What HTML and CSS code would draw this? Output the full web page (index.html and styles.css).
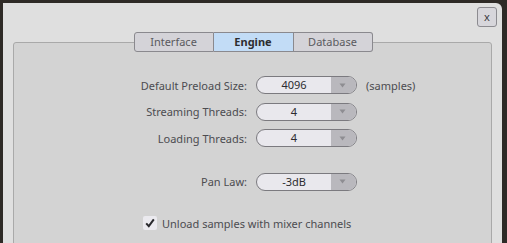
FILE: index.html
```html
<!DOCTYPE html>
<html>
<head>
<meta charset="utf-8">
<link rel="stylesheet" href="styles.css">
</head>
<body>
<div class="window">
  <div class="header">
    <button class="close">x</button>
  </div>
  <div class="tabs">
    <div class="tab">Interface</div>
    <div class="tab active">Engine</div>
    <div class="tab">Database</div>
  </div>
  <div class="frame">
    <div class="form">
      <div class="label">Default Preload Size:</div>
      <div class="combo"><span class="value">4096</span><span class="arrow"><svg width="7" height="5" viewBox="0 0 7 5"><path d="M0.5 0.5h6L3.5 4.5z" fill="#8e8d92"/></svg></span></div>
      <div class="unit">(samples)</div>

      <div class="label">Streaming Threads:</div>
      <div class="combo"><span class="value">4</span><span class="arrow"><svg width="7" height="5" viewBox="0 0 7 5"><path d="M0.5 0.5h6L3.5 4.5z" fill="#8e8d92"/></svg></span></div>
      <div></div>

      <div class="label">Loading Threads:</div>
      <div class="combo"><span class="value">4</span><span class="arrow"><svg width="7" height="5" viewBox="0 0 7 5"><path d="M0.5 0.5h6L3.5 4.5z" fill="#8e8d92"/></svg></span></div>
      <div></div>

      <div class="label spaced">Pan Law:</div>
      <div class="combo spaced"><span class="value">-3dB</span><span class="arrow"><svg width="7" height="5" viewBox="0 0 7 5"><path d="M0.5 0.5h6L3.5 4.5z" fill="#8e8d92"/></svg></span></div>
      <div class="spaced"></div>
    </div>
    <label class="check">
      <span class="box"><svg width="12" height="12" viewBox="0 0 12 12"><path d="M2.2 6.4 L4.8 9.2 L9.8 2.4" fill="none" stroke="#2a2a2e" stroke-width="2"/></svg></span>
      <span class="check-text">Unload samples with mixer channels</span>
    </label>
  </div>
</div>
</body>
</html>
```
FILE: styles.css
```css
html, body {
  margin: 0;
  padding: 0;
  background: #2e2a26;
  width: 507px;
  height: 243px;
  overflow: hidden;
  font-family: "Noto Sans", "Open Sans", sans-serif;
  font-size: 11px;
}

.window {
  margin: 3px 5px 0 3px;
  height: 240px;
  overflow: hidden;
  background: #dfdfdf;
  border-top-right-radius: 6px;
  box-sizing: border-box;
  padding: 0 10px;
}

.header {
  display: flex;
  justify-content: flex-end;
  padding-top: 4px;
  margin-right: -5px;
  height: 25px;
  box-sizing: border-box;
}

.close {
  width: 20px;
  height: 20px;
  padding: 0;
  margin: 0;
  border: 1px solid #8c8b90;
  border-radius: 3px;
  background: #d7d6db;
  color: #3a3a3e;
  font-family: "Noto Sans", sans-serif;
  font-size: 11px;
  line-height: 16px;
  font-weight: normal;
}

.tabs {
  display: flex;
  justify-content: center;
  margin-top: 4px;
  margin-left: 1px;
  position: relative;
  z-index: 1;
  height: 20px;
}

.tab {
  width: 80px;
  height: 20px;
  box-sizing: border-box;
  border: 1px solid #8a898e;
  border-left: none;
  background: #d4d3d8;
  color: #5a5a5e;
  text-align: center;
  line-height: 18px;
}

.tab:first-child {
  border-left: 1px solid #8a898e;
  border-radius: 3px 0 0 3px;
}

.tab:last-child {
  border-radius: 0 3px 3px 0;
  width: 79px;
}

.tab.active {
  background: #c2dcf6;
  color: #2d2d30;
  font-weight: bold;
}

.frame {
  margin-top: -10px;
  height: 220px;
  background: #d3d3d3;
  border: 1px solid #a9a9a9;
  border-radius: 3px;
  box-sizing: border-box;
}

.form {
  display: grid;
  grid-template-columns: 233px 101px auto;
  column-gap: 9px;
  row-gap: 8.5px;
  padding-top: 33px;
  align-items: center;
}

.label {
  text-align: right;
  color: #4c4c50;
}

.spaced {
  margin-top: 17px;
}

.combo {
  display: flex;
  height: 18px;
  box-sizing: border-box;
  border: 1px solid #7b7a7f;
  border-radius: 9px;
  overflow: hidden;
  background: #e9e8ed;
}

.combo .value {
  flex: 1;
  text-align: center;
  line-height: 16px;
  color: #2c2c30;
}

.combo .arrow {
  width: 25px;
  background: #b9b8bd;
  display: flex;
  align-items: center;
  justify-content: center;
  padding-right: 2px;
  box-sizing: border-box;
}

.unit {
  color: #4c4c50;
}

.check {
  display: flex;
  align-items: center;
  margin-top: 25px;
  padding-left: 129px;
  gap: 5px;
}

.box {
  width: 14px;
  height: 14px;
  background: #ebeaef;
  border-radius: 2px;
  display: flex;
  align-items: center;
  justify-content: center;
}

.check-text {
  color: #4c4c50;
}
```
